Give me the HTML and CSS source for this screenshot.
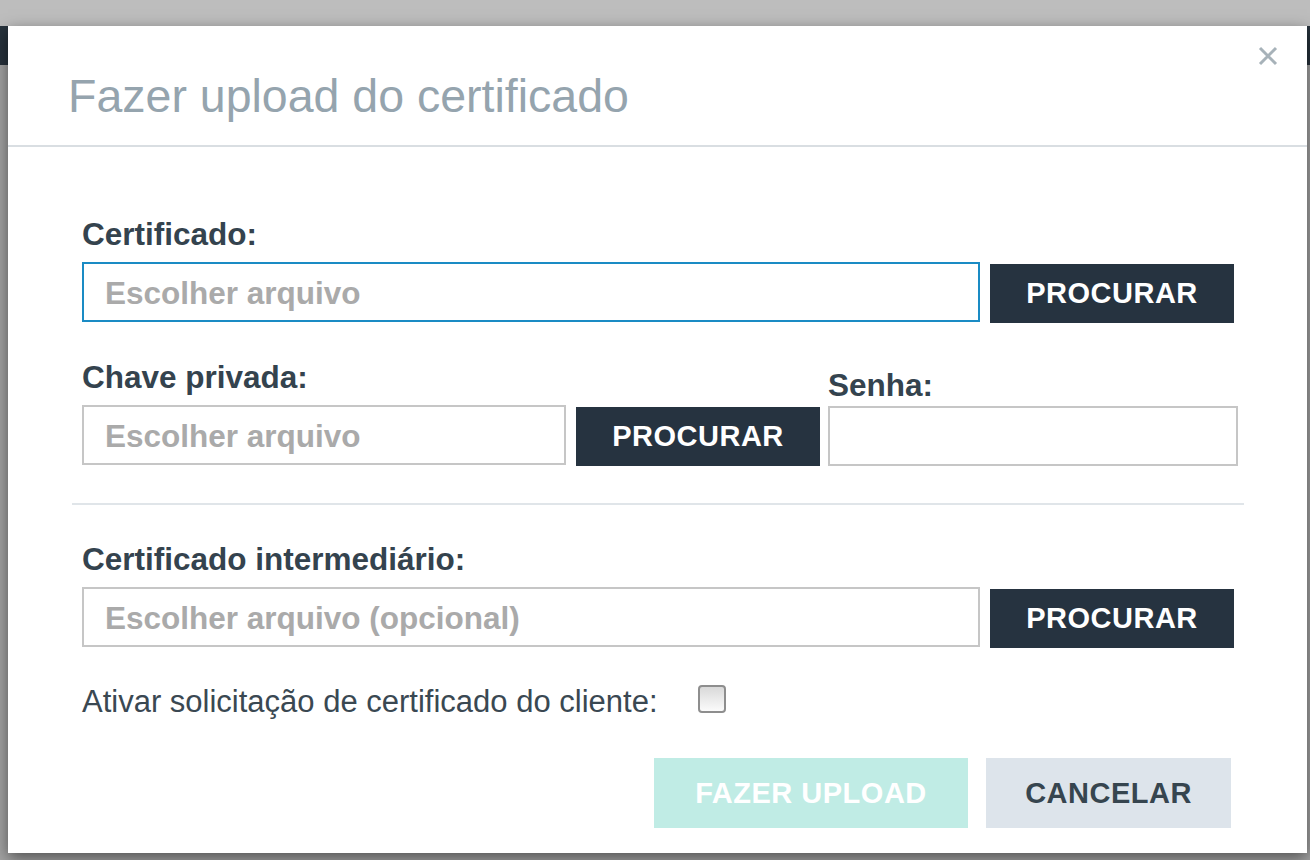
FILE: index.html
```html
<!DOCTYPE html>
<html lang="pt">
<head>
<meta charset="utf-8">
<title>Fazer upload do certificado</title>
<link rel="stylesheet" href="styles.css">
</head>
<body>
<div class="page">
  <div class="page-top"></div>
  <div class="page-bar"></div>
  <div class="page-rest"></div>
</div>
<div class="overlay">
  <div class="modal">
    <div class="modal-header">
      <h1 class="modal-title">Fazer upload do certificado</h1>
      <button class="close" type="button" aria-label="Fechar">
        <svg width="20" height="20" viewBox="0 0 20 20"><path d="M2 2 L18 18 M18 2 L2 18" stroke="#a7b2b9" stroke-width="3" fill="none"/></svg>
      </button>
    </div>
    <div class="modal-body">
      <div class="group">
        <label class="label">Certificado:</label>
        <div class="row">
          <input class="field field-focus w-wide" type="text" placeholder="Escolher arquivo" readonly>
          <button class="btn-dark" type="button">PROCURAR</button>
        </div>
      </div>
      <div class="row row-split">
        <div class="group">
          <label class="label">Chave privada:</label>
          <div class="row">
            <input class="field w-mid" type="text" placeholder="Escolher arquivo" readonly>
            <button class="btn-dark" type="button">PROCURAR</button>
          </div>
        </div>
        <div class="group group-pass">
          <label class="label label-pass">Senha:</label>
          <input class="field w-pass" type="password">
        </div>
      </div>
      <hr class="sep">
      <div class="group">
        <label class="label">Certificado intermediário:</label>
        <div class="row">
          <input class="field w-wide" type="text" placeholder="Escolher arquivo (opcional)" readonly>
          <button class="btn-dark" type="button">PROCURAR</button>
        </div>
      </div>
      <div class="check-row">
        <span class="check-text">Ativar solicitação de certificado do cliente:</span>
        <input class="check" type="checkbox">
      </div>
    </div>
    <div class="modal-footer">
      <button class="btn-upload" type="button">FAZER UPLOAD</button>
      <button class="btn-cancel" type="button">CANCELAR</button>
    </div>
  </div>
</div>
</body>
</html>
```
FILE: styles.css
```css
* { box-sizing: border-box; }
html, body { margin: 0; padding: 0; height: 100%; }
body {
  position: relative;
  overflow: hidden;
  background: #a6a6a6;
  font-family: "Liberation Sans", Arial, sans-serif;
}
.page-top { height: 26px; background: #bdbdbd; }
.page-bar { height: 39px; background: #27323c; }
.page-rest { height: 795px; background: #a3a3a3; }

.overlay { position: absolute; left: 0; top: 0; right: 0; bottom: 0; }
.modal {
  margin: 26px 0 0 8px;
  width: 1299px;
  height: 827px;
  background: #fff;
  box-shadow: 0 5px 15px rgba(0,0,0,0.5);
  display: flex;
  flex-direction: column;
}
.modal-header {
  display: flex;
  justify-content: space-between;
  align-items: flex-start;
  height: 121px;
  border-bottom: 2px solid #d9dee2;
  padding-left: 60px;
}
.modal-title {
  margin: 47px 0 0;
  font-size: 46.5px;
  line-height: 46px;
  font-weight: 400;
  color: #95a4ae;
}
.close {
  margin: 20px 29px 0 0;
  padding: 0;
  border: 0;
  background: none;
  width: 20px;
  height: 20px;
  display: block;
}
.close svg { display: block; }

.modal-body {
  padding: 69px 63px 0 64px;
  flex: 1;
}
.group { display: flex; flex-direction: column; padding: 0 10px; }
.row { display: flex; gap: 10px; align-items: flex-start; }
.row-split { gap: 0; align-items: flex-end; margin-top: 36px; }
.row-split .group { padding-right: 0; }
.group-pass { padding-left: 8px !important; }

.label {
  font-size: 31.5px;
  line-height: 36px;
  font-weight: 700;
  color: #34434e;
  margin-bottom: 10px;
}
.label-pass { margin-bottom: 3px; }

.field {
  height: 60px;
  border: 2px solid #c6c6c6;
  border-radius: 0;
  padding: 2px 0 0 21px;
  font-family: "Liberation Sans", Arial, sans-serif;
  font-size: 31.5px;
  font-weight: 700;
  color: #36454f;
  background: #fff;
  outline: none;
}
.field::placeholder { color: #aaaaaa; opacity: 1; }
.field-focus { border-color: #1a8bc4; }
.w-wide { width: 898px; }
.w-mid { width: 484px; }
.w-pass { width: 410px; }

.btn-dark {
  width: 244px;
  height: 59px;
  margin-top: 2px;
  border: 0;
  background: #263340;
  color: #fff;
  font-family: "Liberation Sans", Arial, sans-serif;
  font-size: 29px;
  font-weight: 700;
  letter-spacing: 0.5px;
  padding: 0;
}

.sep {
  margin: 37px 0 36px;
  border: 0;
  height: 2px;
  background: #e0e5e9;
}

.check-row {
  display: flex;
  align-items: center;
  padding: 0 10px;
  margin-top: 36px;
}
.check-text {
  font-size: 31px;
  line-height: 36px;
  color: #3a4852;
}
.check {
  appearance: none;
  -webkit-appearance: none;
  margin: 0 0 0 40px;
  width: 28px;
  height: 28px;
  border: 2px solid #8e8e8e;
  border-radius: 4px;
  background: linear-gradient(#d9d9d9, #fbfbfb);
  position: relative;
  top: -3px;
}

.modal-footer {
  display: flex;
  justify-content: flex-end;
  gap: 18px;
  padding: 0 76px 25px 0;
}
.btn-upload, .btn-cancel {
  height: 70px;
  border: 0;
  font-family: "Liberation Sans", Arial, sans-serif;
  font-size: 29px;
  font-weight: 700;
  letter-spacing: 0.5px;
  padding: 0;
}
.btn-upload { width: 314px; background: #c0ece5; color: #fff; }
.btn-cancel { width: 245px; background: #dde4eb; color: #36454f; }
```
